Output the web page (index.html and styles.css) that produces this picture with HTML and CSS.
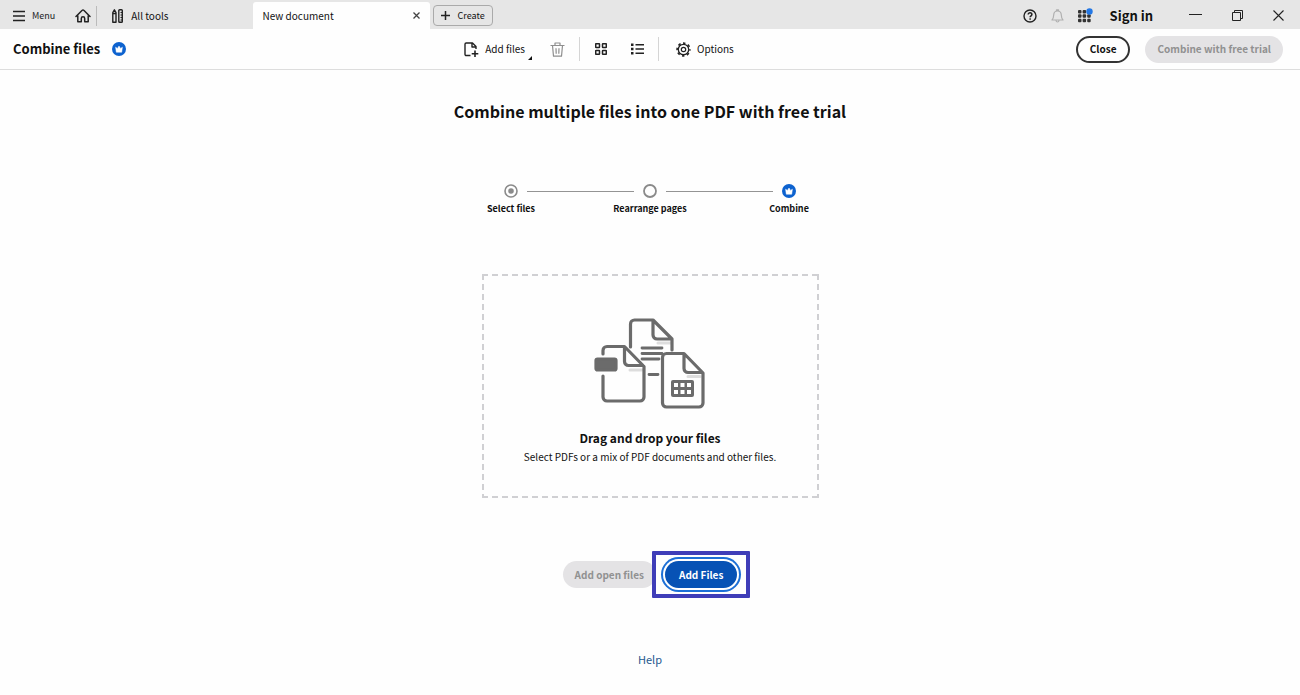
FILE: index.html
```html
<!DOCTYPE html>
<html lang="en">
<head>
  <meta charset="UTF-8" />
  <meta name="viewport" content="width=device-width, initial-scale=1.0"/>
  <title>Combine files</title>
  <link rel="stylesheet" href="styles.css">
</head>
<body>

  <header class="titlebar">
    <button class="bar-btn menu-btn">
      <svg width="12" height="12" viewBox="0 0 12 12"><path d="M0 1.500h12M0 6h12M0 10.500h12" stroke="#222" stroke-width="1.500"/></svg>
      Menu
    </button>
    <button class="bar-btn home-btn" aria-label="Home">
      <svg width="16" height="14" viewBox="0 0 16 14" fill="none" stroke="#222" stroke-width="1.500" stroke-linejoin="round" stroke-linecap="round"><path d="M1 7.500 7.200 1.300a1.100 1.100 0 0 1 1.600 0L15 7.500M2.800 6.500v6.300h3.500V9.500a1.700 1.700 0 0 1 3.400 0v3.300h3.500V6.500"/></svg>
    </button>
    <button class="bar-btn tools-btn">
      <svg width="11" height="14" viewBox="0 0 11 14" fill="none" stroke="#222" stroke-width="1.400" stroke-linejoin="round"><path d="M.8 13.200V3.500L2.400.8 4 3.500v9.700zM.8 4.500H4"/><rect x="6.800" y=".8" width="3.500" height="12.400" rx=".8"/><path d="M8.500 3.500h1.800M8.500 6h1.800M8.500 8.500h1.800M8.500 11h1.800" stroke-width="1"/></svg>
      All tools
    </button>
    <div class="tab">
      <span>New document</span>
      <button class="bar-btn" aria-label="Close tab">
        <svg width="7" height="7" viewBox="0 0 7 7"><path d="M.5.5l6 6M6.500.5l-6 6" stroke="#444" stroke-width="1.300"/></svg>
      </button>
    </div>
    <button class="create-btn">
      <svg width="9" height="9" viewBox="0 0 9 9"><path d="M4.500 0v9M0 4.500h9" stroke="#222" stroke-width="1.500"/></svg>
      Create
    </button>

    <div class="account">
      <button class="bar-btn" aria-label="Help">
        <svg width="14" height="14" viewBox="0 0 14 14" fill="none" stroke="#222"><circle cx="7" cy="7" r="6" stroke-width="1.400"/><path d="M5.200 5.600c0-2.500 3.700-2.300 3.700-.1C8.900 6.800 7.100 6.800 7.100 8.300" stroke-width="1.500"/><circle cx="7.100" cy="10" r=".5" fill="#222" stroke-width=".7"/></svg>
      </button>
      <button class="bar-btn" aria-label="Notifications">
        <svg width="13" height="14" viewBox="0 0 13 14" fill="none" stroke="#b0b0b0" stroke-width="1.200" stroke-linejoin="round"><path d="M1 11c1.500-1.300 1.600-2.500 1.700-5C2.800 3.300 4.300 2 6.500 2s3.700 1.300 3.800 4c.1 2.500.2 3.700 1.700 5zM5.500 1.800V.8h2v1M5 11.500c.2 2 2.800 2 3 0"/></svg>
      </button>
      <button class="bar-btn" aria-label="Apps">
        <svg width="15" height="15" viewBox="0 0 15 15" fill="#333"><rect x="0" y="2" width="3.500" height="3.500" rx="1"/><rect x="4.600" y="2" width="3.500" height="3.500" rx="1"/><rect x="0" y="6.300" width="3.500" height="3.500" rx="1"/><rect x="4.600" y="6.300" width="3.500" height="3.500" rx="1"/><rect x="9.200" y="6.300" width="3.500" height="3.500" rx="1"/><rect x="0" y="10.700" width="3.500" height="3.500" rx="1"/><rect x="4.600" y="10.700" width="3.500" height="3.500" rx="1"/><rect x="9.200" y="10.700" width="3.500" height="3.500" rx="1"/><circle cx="11.500" cy="3.500" r="3.200" fill="#2478e5"/></svg>
      </button>
      <button class="bar-btn sign-in">Sign in</button>
    </div>
    <div class="window-controls">
      <button class="bar-btn" aria-label="Minimize">
        <svg width="13" height="11" viewBox="0 0 13 11"><path d="M0 4.500h13" stroke="#222"/></svg>
      </button>
      <button class="bar-btn" aria-label="Restore">
        <svg width="11" height="11" viewBox="0 0 11 11" fill="none" stroke="#222"><path d="M.5 2.500h8v8h-8zM2.500 2.500v-2h8v8h-2"/></svg>
      </button>
      <button class="bar-btn" aria-label="Close window">
        <svg width="11" height="11" viewBox="0 0 11 11"><path d="M.5.5l10 10M10.500.5l-10 10" stroke="#222" stroke-width="1.100"/></svg>
      </button>
    </div>
  </header>

  <div class="toolbar">
    <div class="tool-title">
      <h1>Combine files</h1>
      <svg class="crown" viewBox="0 0 14 14"><circle cx="7" cy="7" r="7" fill="#0d62cf"/><path d="M3.600 5.200l1.800 1.200L7 4l1.600 2.400 1.800-1.200-.7 5H4.300z" fill="#fff" stroke="#fff" stroke-width=".5" stroke-linejoin="round"/></svg>
    </div>

    <div class="tools">
      <button class="tool add-files">
        <svg width="15" height="15" viewBox="0 0 15 15" fill="none" stroke="#222" stroke-width="1.400"><path d="M6.500 13.500H2.200A1.200 1.200 0 0 1 1 12.300V2.200A1.200 1.200 0 0 1 2.200 1h6.300l3.500 3.500V7M8 1v4h4" stroke-linejoin="round"/><path d="M11 8.500v6.500M7.700 11.700h6.600" stroke-width="1.600"/></svg>
        Add files
        <svg class="corner" width="4" height="4" viewBox="0 0 4 4"><path d="M4 0v4H0z" fill="#111"/></svg>
      </button>
      <button class="tool trash" disabled aria-label="Delete">
        <svg width="15" height="15" viewBox="0 0 15 15" fill="none" stroke="#8e8e8e" stroke-width="1.200" stroke-linejoin="round"><path d="M.5 3.500h14M5 3.300V1h5v2.300M2.500 3.500l1 10.700h8l1-10.700M6 6.200l.2 5.500M9 6.200l-.2 5.500"/></svg>
      </button>
      <span class="divider"></span>
      <button class="tool grid-view" aria-label="Thumbnail view">
        <svg width="12" height="12" viewBox="0 0 12 12" fill="none" stroke="#222" stroke-width="1.500"><rect x=".7" y=".7" width="3.800" height="3.800" rx=".5"/><rect x="7.500" y=".7" width="3.800" height="3.800" rx=".5"/><rect x=".7" y="7.500" width="3.800" height="3.800" rx=".5"/><rect x="7.500" y="7.500" width="3.800" height="3.800" rx=".5"/></svg>
      </button>
      <button class="tool list-view" aria-label="List view">
        <svg width="13" height="12" viewBox="0 0 13 12" fill="#222"><path d="M0 .5h2.500V3H0zM0 4.800h2.500v2.500H0zM0 9.100h2.500v2.500H0zM4.500 1H13v1.500H4.500zM4.500 5.300H13v1.500H4.500zM4.500 9.600H13v1.500H4.500z"/></svg>
      </button>
      <span class="divider"></span>
      <button class="tool options">
        <svg width="15" height="15" viewBox="0 0 15 15" fill="none" stroke="#222"><circle cx="7.500" cy="7.500" r="5.200" stroke-width="1.300"/><circle cx="7.500" cy="7.500" r="2.200" stroke-width="1.200"/><circle cx="7.500" cy="7.500" r="6.400" stroke-width="1.600" stroke-dasharray="2.500 2.527" stroke-dashoffset="1.250"/></svg>
        Options
      </button>
    </div>

    <div class="actions">
      <button class="pill pill-outline">Close</button>
      <button class="pill" disabled>Combine with free trial</button>
    </div>
  </div>

  <main>
    <h2>Combine multiple files into one PDF with free trial</h2>

    <ol class="steps">
      <li>
        <div class="marker"><svg viewBox="0 0 14 14"><circle cx="7" cy="7" r="6" fill="none" stroke="#8a8a8a" stroke-width="1.600"/><circle cx="7" cy="7" r="2.800" fill="#8a8a8a"/></svg></div>
        Select files
      </li>
      <li>
        <div class="marker"><svg viewBox="0 0 14 14"><circle cx="7" cy="7" r="6" fill="none" stroke="#8a8a8a" stroke-width="1.800"/></svg></div>
        Rearrange pages
      </li>
      <li>
        <div class="marker"><svg viewBox="0 0 14 14"><circle cx="7" cy="7" r="7" fill="#0d62cf"/><path d="M3.600 5.200l1.800 1.200L7 4l1.600 2.400 1.800-1.200-.7 5H4.300z" fill="#fff" stroke="#fff" stroke-width=".5" stroke-linejoin="round"/></svg></div>
        Combine
      </li>
    </ol>

    <section class="dropzone">
      <svg width="112" height="92" viewBox="0 0 112 92" fill="none" stroke="#6b6b6b" stroke-width="3.200" stroke-linecap="round" stroke-linejoin="round">
        <path d="M64 25h13" stroke="#ddd" stroke-width="3"/>
        <path d="M36.500 29V6a4 4 0 0 1 4-4H59L78 21v11M59 2v15a4 4 0 0 0 4 4h15"/>
        <path d="M48 30h20M48 35.500h20M48 41h17M55 56.500h9" stroke-width="2.800"/>
        <path d="M36 52h12M94 58.500h12" stroke="#ddd" stroke-width="3"/>
        <path d="M9 36v-3.500a4 4 0 0 1 4-4h17.500L50 48.500V79a4 4 0 0 1-4 4H13a4 4 0 0 1-4-4V58M30.500 29v14.500a4 4 0 0 0 4 4H49"/>
        <rect x="2" y="41" width="20" height="11" rx="1.500" fill="#6b6b6b"/>
        <path d="M72.500 35.500H90L109 55v30a4 4 0 0 1-4 4H72.500a4 4 0 0 1-4-4V39.500a4 4 0 0 1 4-4zM90 35.500v15a4 4 0 0 0 4 4h14"/>
        <rect x="77" y="62" width="23" height="17" rx="2" fill="#6b6b6b" stroke="none"/>
        <path d="M80 65h4v4h-4zM86.500 65h4v4h-4zM93 65h4v4h-4zM80 72h4v4h-4zM86.500 72h4v4h-4zM93 72h4v4h-4z" fill="#fff" stroke="none"/>
      </svg>
      <h3>Drag and drop your files</h3>
      <p>Select PDFs or a mix of PDF documents and other files.</p>
    </section>

    <div class="file-buttons">
      <button class="pill" disabled>Add open files</button>
      <div class="highlight">
        <button class="pill pill-primary">Add Files</button>
      </div>
    </div>

    <a class="help" href="#">Help</a>
  </main>

</body>
</html>
```
FILE: styles.css
```css
* { box-sizing: border-box; }
body {
  margin: 0;
  background: #fefefe;
  color: #111;
  font-family: "Noto Sans CJK SC", "Open Sans", sans-serif;
  font-size: 10px;
  line-height: 16px;
}
h1, h2, h3, p, ol { margin: 0; padding: 0; }
button { font: inherit; color: inherit; cursor: pointer; }
button:disabled { cursor: default; }
svg { display: block; flex: none; }

/* window title bar */
.titlebar {
  display: flex;
  align-items: center;
  height: 29px;
  padding: 2px 16px 0 13px;
  background: #e6e6e6;
}
.bar-btn {
  display: flex;
  align-items: center;
  padding: 0;
  border: none;
  background: none;
}
.menu-btn { gap: 7px; font-size: 9px; color: #222; }
.home-btn { margin-left: 20px; }
.tools-btn {
  gap: 8px;
  height: 20px;
  margin-left: 5px;
  padding-left: 15px;
  border-left: 1px solid #bbb;
}
.tab {
  display: flex;
  align-items: center;
  justify-content: space-between;
  align-self: stretch;
  width: 177px;
  margin-left: 84px;
  padding: 0 10px;
  border-radius: 3px 3px 0 0;
  background: #fefefe;
}
.create-btn {
  display: flex;
  align-items: center;
  gap: 8px;
  height: 21px;
  margin-left: 3px;
  padding: 0 7px;
  border: 1px solid #aaa;
  border-radius: 4px;
  background: none;
  font-size: 9px;
}
.account {
  display: flex;
  align-items: center;
  gap: 14px;
  margin-left: auto;
}
.sign-in { margin-left: 3px; font-size: 13px; font-weight: bold; }
.window-controls {
  display: flex;
  align-items: center;
  gap: 30px;
  height: 24px;
  margin-left: 36px;
}

/* combine toolbar */
.toolbar {
  display: flex;
  align-items: center;
  justify-content: space-between;
  height: 41px;
  padding: 0 17px 0 13px;
  border-bottom: 1px solid #ddd;
}
.tool-title { display: flex; align-items: center; gap: 12px; }
h1 { font-size: 13px; line-height: 20px; }
.crown { width: 14px; height: 14px; }
.tools { display: flex; align-items: center; }
.tool {
  display: flex;
  align-items: center;
  gap: 6px;
  padding: 0;
  border: none;
  background: none;
}
.corner { align-self: flex-end; margin: 0 0 -3px -3px; }
.trash { margin-left: 18px; }
.divider { width: 1px; height: 24px; margin: 0 15px 0 14px; background: #d5d5d5; }
.list-view { margin-left: 24px; }
.options { padding: 0 4px 0 2px; }
.actions { display: flex; gap: 15px; }
.pill {
  height: 27px;
  padding: 0 12px;
  border: none;
  border-radius: 14px;
  background: #e4e3e5;
  font-weight: bold;
  white-space: nowrap;
}
.pill:disabled { color: #919191; }
.pill-outline {
  border: 2px solid #333;
  background: #fefefe;
}

/* page content */
main {
  display: flex;
  flex-direction: column;
  align-items: center;
  padding-top: 29px;
}
h2 { font-size: 16px; line-height: 24px; }
.steps {
  display: flex;
  margin-top: 61px;
  list-style: none;
  font-size: 9px;
  font-weight: bold;
  text-align: center;
}
.steps li { width: 139px; }
.marker { display: flex; align-items: center; gap: 9px; margin-bottom: 3px; }
.marker svg { width: 14px; height: 14px; }
.marker::before, .marker::after {
  content: "";
  flex: 1;
  height: 1px;
  background: #949494;
}
.steps li:first-child .marker::before,
.steps li:last-child .marker::after { background: none; }
/* long dashes, one gradient for each side */
.dropzone {
  display: flex;
  flex-direction: column;
  align-items: center;
  width: 337px;
  margin-top: 57px;
  padding: 44px 20px 33px;
  background:
    repeating-linear-gradient(90deg, #d0d0d3 0 6px, transparent 6px 10px) top / 100% 2px no-repeat,
    repeating-linear-gradient(90deg, #d0d0d3 0 6px, transparent 6px 10px) bottom / 100% 2px no-repeat,
    repeating-linear-gradient(#d0d0d3 0 6px, transparent 6px 10px) left / 2px 100% no-repeat,
    repeating-linear-gradient(#d0d0d3 0 6px, transparent 6px 10px) right / 2px 100% no-repeat;
}
.dropzone h3 { margin-top: 18px; font-size: 12px; line-height: 20px; }
.dropzone p { margin-top: 1px; }
.file-buttons { display: flex; gap: 9px; margin-top: 63px; }
.highlight { position: relative; }
/* frame drawn around the main action */
.highlight::before {
  content: "";
  position: absolute;
  inset: -10px -13px;
  border: 4px solid #3f3db8;
  border-radius: 1px;
  background: #fefefe;
}
.pill-primary {
  position: relative;
  padding: 0 14px;
  background: #0752b5;
  color: #fff;
  box-shadow: 0 0 0 2px #fff, 0 0 0 4px #1c6fd6;
}
.help { margin-top: 63px; font-size: 11px; color: #24588f; text-decoration: none; }
```
